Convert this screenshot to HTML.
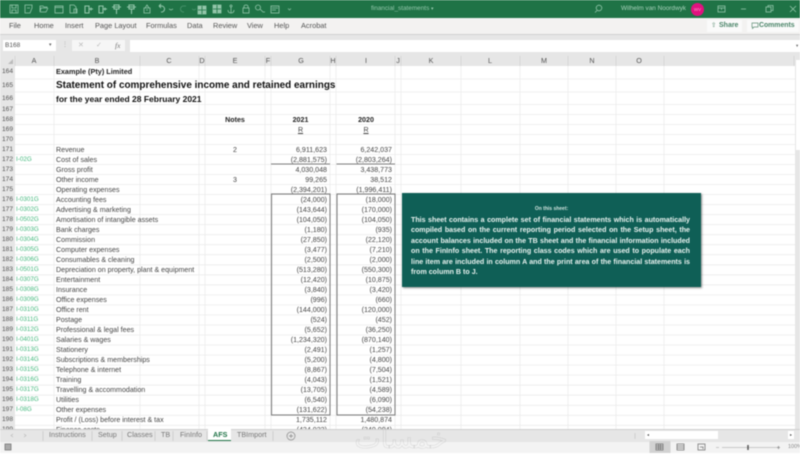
<!DOCTYPE html>
<html><head><meta charset="utf-8"><style>
html,body{margin:0;padding:0;background:#fff}
#p{position:relative;width:800px;height:460px;overflow:hidden;background:#fff;font-family:"Liberation Sans",sans-serif;filter:blur(.5px)}
#p div,#p span{position:absolute;white-space:nowrap}
.tb{left:0;top:0;width:800px;height:18px;background:#1f7346}
.rb{left:0;top:18px;width:800px;height:16px;background:#f3f2f1;border-bottom:1px solid #d0d0d0}
.fb{left:0;top:35px;width:800px;height:31px;background:#e6e6e6}
.t{font-size:7.4px;line-height:16px;top:18px;color:#555}
.h{font-size:7.2px;top:55px;line-height:11px;color:#555;width:20px;text-align:center}
.s{left:0;top:66px;width:795px;height:363px;overflow:hidden;background:#fff}
.n{left:0;width:15px;background:#e6e6e6;font-size:6.6px;color:#555;padding-left:2px;box-sizing:border-box;height:11px;line-height:10px}
.a{left:16px;font-size:6.3px;color:#46b97f;line-height:10px}
.b{left:56px;font-size:7.1px;color:#444;line-height:10px}
.g,.i{font-size:7.1px;color:#444;line-height:10px;text-align:right;width:60px}
.g{left:267px}.i{left:332px}
.m{left:205px;width:60px;text-align:center;font-size:7.1px;color:#444;line-height:10px}
.k{font-weight:bold;color:#222}
.l{left:411px;width:279px;text-align:justify;text-align-last:justify;color:#e8f2ef;font-weight:bold;font-size:7.1px;line-height:10px}
.u{font-size:7.2px;line-height:12px;top:429px;color:#777}
</style></head><body><div id="p">

<div class="tb"></div>
<svg style="position:absolute;left:0;top:0" width="800" height="18" fill="none" stroke="#93c6aa" stroke-width=".8">
<rect x="10" y="5" width="8" height="8"/><path d="M12 5v3h4V5M12 13v-3h4v3"/>
<path d="M25 5h7v3l-2 5h-5zM27 8h3"/>
<path d="M40 6h3l1 1h3v1h-6l-1 4zM40 12h6l2-4"/>
<rect x="55" y="6" width="8" height="7"/><path d="M55 7.500h8"/>
<path d="M70 5h4l2 2v6h-6zM74 9h3v4h-3z"/>
<path d="M85 6h4v7h-4zM89 9h4M91 7.500v3" stroke-width="1.100"/>
<path d="M99 6h4v7h-4zM103 9h4M105 7.500v3" stroke-width="1.100"/>
<path d="M114 5h5v4h-5zM116.500 9v5M112 7h9" stroke-width="1.100"/>
<path d="M129 5h5v4h-5zM131.500 9v5M127 7h9" stroke-width="1.100"/>
<path d="M144 8h6v5h-6zM145 8l2-3 2 3M146 10h2"/>
<path d="M159 6h3a3 3 0 1 1-1 6M159 6l2-2M159 6l2 2" stroke-width="1"/>
<path d="M169 9l2 1 2-1" stroke-width=".7"/>
<path d="M186 6h-3a3 3 0 1 0 1 6" stroke="#4f9871"/>
<path d="M192 9l2 1 2-1" stroke="#4f9871" stroke-width=".7"/>
<path d="M198 6h8v8h-8z" fill="#93c6aa"/><path d="M198 10h8M202 6v8" stroke="#1f7346"/>
<path d="M213 5h8v8h-8z" fill="#93c6aa"/><path d="M213 9h8M217 5v8" stroke="#1f7346"/>
<circle cx="231" cy="6" r="1"/><path d="M231 7v6M228 10c0 2 1 3 3 3s3-1 3-3"/>
<rect x="243" y="8" width="6" height="5"/><path d="M244 8V6.500c0-2 4-2 4 0V8"/>
<circle cx="258" cy="7.500" r="2.500"/><path d="M260 9l3 3h2"/>
<rect x="271" y="6" width="8" height="7"/><path d="M272 8h6M272 10h4"/>
<path d="M288 8.500l1.500 1.500 1.500-1.500" stroke-width=".7"/>
<circle cx="599" cy="8" r="2.800"/><path d="M597 10.500l-2 2"/>
<rect x="718" y="6" width="7" height="6"/><path d="M718 8h7M721.500 8v2"/>
<path d="M741 9h5"/>
<rect x="766" y="7" width="5" height="5"/><path d="M768 7V5.500h5v5h-2"/>
<path d="M790 6l6 6M796 6l-6 6"/>
</svg>
<span style="left:371px;top:4px;font-size:6.400px;line-height:10px;color:#93c6aa">financial_statements</span>
<span style="left:431px;top:4px;font-size:5px;line-height:10px;color:#93c6aa">▾</span>
<span style="left:621px;top:4px;font-size:6.400px;line-height:10px;color:#a9d2bb">Wilhelm van Noordwyk</span>
<div style="left:691px;top:3px;width:13px;height:13px;border-radius:50%;background:#e0127f;color:#f9c;font-size:4.500px;line-height:13px;text-align:center">WV</div>

<div class="rb"></div>
<span class="t" style="left:9px">File</span>
<span class="t" style="left:34px">Home</span>
<span class="t" style="left:65px">Insert</span>
<span class="t" style="left:95px">Page Layout</span>
<span class="t" style="left:146px">Formulas</span>
<span class="t" style="left:187px">Data</span>
<span class="t" style="left:213px">Review</span>
<span class="t" style="left:247px">View</span>
<span class="t" style="left:274px">Help</span>
<span class="t" style="left:301px">Acrobat</span>
<div style="left:707px;top:20px;width:35px;height:12px;background:#fafafa"></div>
<span style="left:711px;top:20px;font-size:6.500px;line-height:12px;color:#5e8d74">⇧</span>
<span style="left:719px;top:20px;font-size:7px;line-height:12px;color:#4a8468;font-weight:bold">Share</span>
<div style="left:747px;top:20px;width:52px;height:12px;background:#fafafa"></div>
<svg style="position:absolute;left:751px;top:22px" width="8" height="8" fill="none" stroke="#5e8d74" stroke-width=".7"><path d="M1 1h6v4H3L1.500 6.500V5H1z"/></svg>
<span style="left:759px;top:20px;font-size:6.900px;line-height:12px;color:#4a8468;font-weight:bold">Comments</span>

<div class="fb"></div>
<div style="left:3px;top:40px;width:53px;height:11px;background:#fff"></div>
<span style="left:5px;top:40px;font-size:6.500px;line-height:11px;color:#555">B168</span>
<span style="left:49px;top:40px;font-size:5px;line-height:11px;color:#666">▾</span>
<span style="left:62px;top:40px;font-size:6px;line-height:11px;color:#aaa">⋮</span>
<div style="left:72px;top:40px;width:53px;height:11px;background:#f6f6f6"></div>
<span style="left:78px;top:40px;font-size:7px;line-height:11px;color:#bbb">✕</span>
<span style="left:96px;top:40px;font-size:7px;line-height:11px;color:#bbb">✓</span>
<span style="left:115px;top:40px;font-size:7.500px;line-height:11px;color:#777;font-family:'Liberation Serif',serif;font-style:italic">fx</span>
<div style="left:130px;top:40px;width:670px;height:12px;background:#fff"></div>
<span style="left:796px;top:40px;font-size:4.500px;line-height:11px;color:#666">▾</span>

<span class="h" style="left:24px">A</span>
<span class="h" style="left:87px">B</span>
<span class="h" style="left:159px">C</span>
<span class="h" style="left:192px">D</span>
<span class="h" style="left:225px">E</span>
<span class="h" style="left:258px">F</span>
<span class="h" style="left:291px">G</span>
<span class="h" style="left:323px">H</span>
<span class="h" style="left:356px">I</span>
<span class="h" style="left:388px">J</span>
<span class="h" style="left:421px">K</span>
<span class="h" style="left:480px">L</span>
<span class="h" style="left:534px">M</span>
<span class="h" style="left:582px">N</span>
<span class="h" style="left:629px">O</span>
<svg style="position:absolute;left:0;top:53px" width="800" height="13" fill="none" stroke="#d0d0d0" stroke-width=".7"><path d="M15 3v10M54 3v10M140 3v10M199 3v10M205 3v10M265 3v10M271 3v10M330 3v10M336 3v10M395 3v10M401 3v10M461 3v10M520 3v10M568 3v10M616 3v10M664 3v10M794 3v10"/><path d="M8 11l5-5v5z" fill="#bbb" stroke="none"/></svg>

<div class="s">
<svg style="position:absolute;left:0;top:0" width="795" height="363" fill="none" stroke="#ececec" stroke-width=".8">
<path d="M54 0v363M140 0v363M199 0v363M205 0v363M265 0v363M271 0v363M330 0v363M336 0v363M395 0v363M401 0v363M461 0v363M520 0v363M568 0v363M616 0v363M664 0v363"/>
<path d="M15 13h780M15 26h780M15 38.500h780M15 48.500h780M15 58.500h780M15 68.500h780M15 78.500h780M15 88.500h780M15 98.500h780M15 108.500h780M15 118.500h780M15 128.500h780M15 138.600h780M15 148.600h780M15 158.600h780M15 168.700h780M15 178.700h780M15 188.700h780M15 198.800h780M15 208.800h780M15 218.800h780M15 228.900h780M15 238.900h780M15 248.900h780M15 259h780M15 269h780M15 279h780M15 289.100h780M15 299.100h780M15 309.100h780M15 319.200h780M15 329.200h780M15 339.300h780M15 349.300h780M15 359.300h780"/>
</svg>
<svg style="position:absolute;left:0;top:0" width="795" height="363" fill="none" stroke="#7f7f7f" stroke-width="1.100"><path d="M271 98h59M336.500 98h58.500"/><rect x="271.500" y="128" width="58.500" height="221"/><rect x="337" y="128" width="58" height="221"/></svg>

<div class="n" style="top:0;height:13px;line-height:12px">164</div><div class="n" style="top:13px;height:13px;line-height:13px">165</div><div class="n" style="top:26px;height:13px;line-height:13px">166</div><div class="n" style="top:39px">167</div><div class="n" style="top:49px">168</div><div class="n" style="top:59px">169</div><div class="n" style="top:69px">170</div>
<span class="b k" style="top:1px;font-size:7.300px">Example (Pty) Limited</span>
<span class="b k" style="top:14.500px;font-size:9.950px;color:#111">Statement of comprehensive income and retained earnings</span>
<span class="b k" style="top:27.500px;font-size:8.500px;color:#111">for the year ended 28 February 2021</span>
<span class="m k" style="top:48.500px">Notes</span>
<span class="g k" style="top:48.500px;left:270.500px;text-align:center">2021</span>
<span class="i k" style="top:48.500px;left:336px;text-align:center">2020</span>
<span class="g" style="top:58.500px;left:270.500px;text-align:center;text-decoration:underline">R</span>
<span class="i" style="top:58.500px;left:336px;text-align:center;text-decoration:underline">R</span>

<div class="n" style="top:78.500px">171</div><span class="b" style="top:78.500px">Revenue</span><span class="m" style="top:78.500px">2</span><span class="g" style="top:78.500px">6,911,623</span><span class="i" style="top:78.500px">6,242,037</span>
<div class="n" style="top:88.500px">172</div><span class="a" style="top:88.500px">I-02G</span><span class="b" style="top:88.500px">Cost of sales</span><span class="g" style="top:88.500px">(2,881,575)</span><span class="i" style="top:88.500px">(2,803,264)</span>
<div class="n" style="top:98.500px">173</div><span class="b" style="top:98.500px">Gross profit</span><span class="g" style="top:98.500px">4,030,048</span><span class="i" style="top:98.500px">3,438,773</span>
<div class="n" style="top:108.500px">174</div><span class="b" style="top:108.500px">Other income</span><span class="m" style="top:108.500px">3</span><span class="g" style="top:108.500px">99,265</span><span class="i" style="top:108.500px">38,512</span>
<div class="n" style="top:118.500px">175</div><span class="b" style="top:118.500px">Operating expenses</span><span class="g" style="top:118.500px">(2,394,201)</span><span class="i" style="top:118.500px">(1,996,411)</span>
<div class="n" style="top:128.500px">176</div><span class="a" style="top:128.500px">I-0301G</span><span class="b" style="top:128.500px">Accounting fees</span><span class="g" style="top:128.500px">(24,000)</span><span class="i" style="top:128.500px">(18,000)</span>
<div class="n" style="top:138.500px">177</div><span class="a" style="top:138.500px">I-0302G</span><span class="b" style="top:138.500px">Advertising &amp; marketing</span><span class="g" style="top:138.500px">(143,644)</span><span class="i" style="top:138.500px">(170,000)</span>
<div class="n" style="top:148.600px">178</div><span class="a" style="top:148.600px">I-0502G</span><span class="b" style="top:148.600px">Amortisation of intangible assets</span><span class="g" style="top:148.600px">(104,050)</span><span class="i" style="top:148.600px">(104,050)</span>
<div class="n" style="top:158.600px">179</div><span class="a" style="top:158.600px">I-0303G</span><span class="b" style="top:158.600px">Bank charges</span><span class="g" style="top:158.600px">(1,180)</span><span class="i" style="top:158.600px">(935)</span>
<div class="n" style="top:168.700px">180</div><span class="a" style="top:168.700px">I-0304G</span><span class="b" style="top:168.700px">Commission</span><span class="g" style="top:168.700px">(27,850)</span><span class="i" style="top:168.700px">(22,120)</span>
<div class="n" style="top:178.700px">181</div><span class="a" style="top:178.700px">I-0305G</span><span class="b" style="top:178.700px">Computer expenses</span><span class="g" style="top:178.700px">(3,477)</span><span class="i" style="top:178.700px">(7,210)</span>
<div class="n" style="top:188.700px">182</div><span class="a" style="top:188.700px">I-0306G</span><span class="b" style="top:188.700px">Consumables &amp; cleaning</span><span class="g" style="top:188.700px">(2,500)</span><span class="i" style="top:188.700px">(2,000)</span>
<div class="n" style="top:198.800px">183</div><span class="a" style="top:198.800px">I-0501G</span><span class="b" style="top:198.800px">Depreciation on property, plant &amp; equipment</span><span class="g" style="top:198.800px">(513,280)</span><span class="i" style="top:198.800px">(550,300)</span>
<div class="n" style="top:208.800px">184</div><span class="a" style="top:208.800px">I-0307G</span><span class="b" style="top:208.800px">Entertainment</span><span class="g" style="top:208.800px">(12,420)</span><span class="i" style="top:208.800px">(10,875)</span>
<div class="n" style="top:218.800px">185</div><span class="a" style="top:218.800px">I-0308G</span><span class="b" style="top:218.800px">Insurance</span><span class="g" style="top:218.800px">(3,840)</span><span class="i" style="top:218.800px">(3,420)</span>
<div class="n" style="top:228.900px">186</div><span class="a" style="top:228.900px">I-0309G</span><span class="b" style="top:228.900px">Office expenses</span><span class="g" style="top:228.900px">(996)</span><span class="i" style="top:228.900px">(660)</span>
<div class="n" style="top:238.900px">187</div><span class="a" style="top:238.900px">I-0310G</span><span class="b" style="top:238.900px">Office rent</span><span class="g" style="top:238.900px">(144,000)</span><span class="i" style="top:238.900px">(120,000)</span>
<div class="n" style="top:248.900px">188</div><span class="a" style="top:248.900px">I-0311G</span><span class="b" style="top:248.900px">Postage</span><span class="g" style="top:248.900px">(524)</span><span class="i" style="top:248.900px">(452)</span>
<div class="n" style="top:259px">189</div><span class="a" style="top:259px">I-0312G</span><span class="b" style="top:259px">Professional &amp; legal fees</span><span class="g" style="top:259px">(5,652)</span><span class="i" style="top:259px">(36,250)</span>
<div class="n" style="top:269px">190</div><span class="a" style="top:269px">I-0401G</span><span class="b" style="top:269px">Salaries &amp; wages</span><span class="g" style="top:269px">(1,234,320)</span><span class="i" style="top:269px">(870,140)</span>
<div class="n" style="top:279px">191</div><span class="a" style="top:279px">I-0313G</span><span class="b" style="top:279px">Stationery</span><span class="g" style="top:279px">(2,491)</span><span class="i" style="top:279px">(1,257)</span>
<div class="n" style="top:289.100px">192</div><span class="a" style="top:289.100px">I-0314G</span><span class="b" style="top:289.100px">Subscriptions &amp; memberships</span><span class="g" style="top:289.100px">(5,200)</span><span class="i" style="top:289.100px">(4,800)</span>
<div class="n" style="top:299.100px">193</div><span class="a" style="top:299.100px">I-0315G</span><span class="b" style="top:299.100px">Telephone &amp; internet</span><span class="g" style="top:299.100px">(8,867)</span><span class="i" style="top:299.100px">(7,504)</span>
<div class="n" style="top:309.100px">194</div><span class="a" style="top:309.100px">I-0316G</span><span class="b" style="top:309.100px">Training</span><span class="g" style="top:309.100px">(4,043)</span><span class="i" style="top:309.100px">(1,521)</span>
<div class="n" style="top:319.200px">195</div><span class="a" style="top:319.200px">I-0317G</span><span class="b" style="top:319.200px">Travelling &amp; accommodation</span><span class="g" style="top:319.200px">(13,705)</span><span class="i" style="top:319.200px">(4,589)</span>
<div class="n" style="top:329.200px">196</div><span class="a" style="top:329.200px">I-0318G</span><span class="b" style="top:329.200px">Utilities</span><span class="g" style="top:329.200px">(6,540)</span><span class="i" style="top:329.200px">(6,090)</span>
<div class="n" style="top:339.300px">197</div><span class="a" style="top:339.300px">I-08G</span><span class="b" style="top:339.300px">Other expenses</span><span class="g" style="top:339.300px">(131,622)</span><span class="i" style="top:339.300px">(54,238)</span>
<div class="n" style="top:349.300px">198</div><span class="b" style="top:349.300px">Profit / (Loss) before interest &amp; tax</span><span class="g" style="top:349.300px">1,735,112</span><span class="i" style="top:349.300px">1,480,874</span>
<div class="n" style="top:359.300px">199</div><span class="b" style="top:359.300px">Finance costs</span><span class="g" style="top:359.300px">(434,023)</span><span class="i" style="top:359.300px">(340,004)</span>
</div>

<div style="left:402px;top:193px;width:299px;height:94px;background:#0f5f56;box-shadow:1px 1px 2px rgba(0,0,0,.45)"></div>
<span style="left:402px;top:204.500px;width:299px;text-align:center;font-size:5px;line-height:8px;color:#cfe2dd;font-weight:bold">On this sheet:</span>
<span class="l" style="top:214.500px">This sheet contains a complete set of financial statements which is automatically</span>
<span class="l" style="top:225px">compiled based on the current reporting period selected on the Setup sheet, the</span>
<span class="l" style="top:235.500px">account balances included on the TB sheet and the financial information included</span>
<span class="l" style="top:246px">on the FinInfo sheet. The reporting class codes which are used to populate each</span>
<span class="l" style="top:256.500px">line item are included in column A and the print area of the financial statements is</span>
<span class="l" style="top:267px;text-align-last:left">from column B to J.</span>

<div style="left:795px;top:53px;width:5px;height:389px;background:#e6e6e6"></div>
<div style="left:796px;top:60px;width:4px;height:90px;background:#fff"></div>

<div style="left:0;top:429px;width:800px;height:12.500px;background:#e6e6e6;border-top:1px solid #cfcfcf;box-sizing:border-box"></div>
<div style="left:0;top:441.500px;width:800px;height:11.500px;background:#f3f3f3"></div>
<svg style="position:absolute;left:0;top:429px" width="800" height="13" fill="none" stroke="#c4c4c4" stroke-width=".7"><path d="M43 2v10M92 2v10M122 2v10M155 2v10M173 2v10M207 2v10M273 2v10M635 4v6"/><path d="M13 5l-2 1.500 2 1.500M24 5l2 1.500-2 1.500" stroke="#bbb"/><circle cx="291" cy="7" r="4" stroke="#888"/><path d="M289 7h4M291 5v4" stroke="#888"/></svg>
<span class="u" style="left:49px">Instructions</span>
<span class="u" style="left:98px">Setup</span>
<span class="u" style="left:127px">Classes</span>
<span class="u" style="left:161px">TB</span>
<span class="u" style="left:180px">FinInfo</span>
<div style="left:208px;top:429px;width:23px;height:12px;background:#fff;border-bottom:1.500px solid #1f7346;box-sizing:border-box"></div>
<span class="u" style="left:213px;color:#1f7346;font-weight:bold">AFS</span>
<span class="u" style="left:237px">TBImport</span>
<div style="left:645px;top:431px;width:6px;height:8px;background:#fff;font-size:4px;line-height:8px;text-align:center;color:#444">◂</div>
<div style="left:651px;top:431px;width:67px;height:8px;background:#fff"></div>
<div style="left:788px;top:431px;width:6px;height:8px;background:#fff;font-size:4px;line-height:8px;text-align:center;color:#444">▸</div>

<svg style="position:absolute;left:0;top:441px" width="800" height="12" fill="none" stroke="#777" stroke-width=".8"><rect x="5" y="3" width="6" height="6" fill="#aaa"/><rect x="649.500" y="0" width="21" height="12" fill="#d2d2d2" stroke="none"/><rect x="656" y="3" width="7" height="6"/><path d="M656 5h7M656 7h7M658.500 3v6M660.500 3v6"/><rect x="677" y="3" width="7" height="6"/><path d="M677 5h7M677 7h7"/><rect x="698" y="3" width="7" height="6"/><path d="M700 6h3v2"/><path d="M716 6.500h3M722 6.500h55" stroke="#bbb"/><path d="M748 4v5" stroke="#555" stroke-width="1.500"/><path d="M777 6.500h3M778.500 5v3" stroke="#888"/></svg>
<span style="left:788px;top:442px;font-size:5.500px;line-height:10px;color:#888">100%</span>

<span dir="rtl" lang="ar" style="left:352px;top:419px;width:98px;text-align:center;font-family:'DejaVu Sans',sans-serif;font-size:28px;line-height:40px;color:transparent;-webkit-text-stroke:.6px rgba(120,120,120,.2)">خمسات</span>

</div></body></html>
